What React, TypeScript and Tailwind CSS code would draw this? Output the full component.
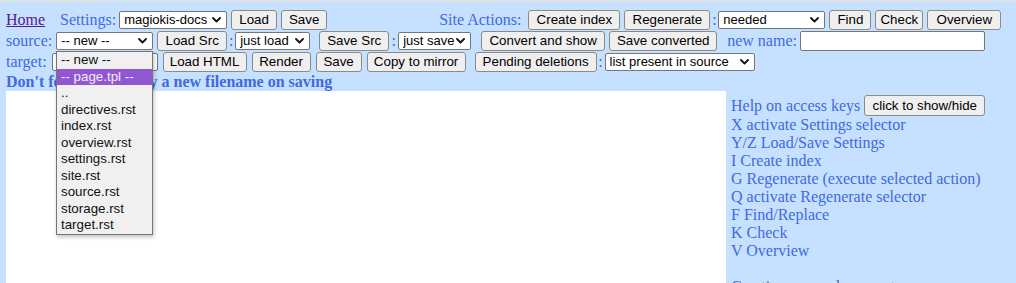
import React from "react";

const serif = { fontFamily: '"Liberation Serif", "Times New Roman", serif' };
const sans = { fontFamily: '"Liberation Sans", Arial, sans-serif' };

function Btn({ w, children, className = "" }: { w: string; children: React.ReactNode; className?: string }) {
  return (
    <div
      style={sans}
      className={`h-[20px] shrink-0 flex items-center justify-center whitespace-nowrap rounded-[3px] border border-[#8a8a8a] bg-[#efefef] text-[13.33px] text-black ${w} ${className}`}
    >
      {children}
    </div>
  );
}

function Chevron() {
  return (
    <svg width="9" height="6" viewBox="0 0 9 6" className="shrink-0">
      <path d="M1 1 L4.5 4.5 L8 1" fill="none" stroke="#111" strokeWidth="1.8" strokeLinecap="round" strokeLinejoin="round" />
    </svg>
  );
}

function Sel({ w, children, className = "" }: { w: string; children: React.ReactNode; className?: string }) {
  return (
    <div
      style={sans}
      className={`h-[18px] mt-[1px] shrink-0 flex items-center justify-between whitespace-nowrap overflow-hidden rounded-[2px] border border-[#767676] bg-white pl-[4px] pr-[5px] text-[13px] text-black ${w} ${className}`}
    >
      <span className="overflow-hidden">{children}</span>
      <Chevron />
    </div>
  );
}

function Label({ children, className = "text-[#4169e1]" }: { children: React.ReactNode; className?: string }) {
  return (
    <span style={serif} className={`shrink-0 whitespace-nowrap text-[16px] leading-[20px] ${className}`}>
      {children}
    </span>
  );
}

function Colon({ w }: { w: string }) {
  return (
    <span style={serif} className={`shrink-0 text-center text-[16px] leading-[20px] text-[#4169e1] ${w}`}>
      :
    </span>
  );
}

const options = [
  "-- new --",
  "-- page.tpl --",
  "..",
  "directives.rst",
  "index.rst",
  "overview.rst",
  "settings.rst",
  "site.rst",
  "source.rst",
  "storage.rst",
  "target.rst",
];

const helpLines = [
  "X activate Settings selector",
  "Y/Z Load/Save Settings",
  "I Create index",
  "G Regenerate (execute selected action)",
  "Q activate Regenerate selector",
  "F Find/Replace",
  "K Check",
  "V Overview",
];

export default function App() {
  return (
    <div className="relative w-[1016px] h-[283px] overflow-hidden bg-[#c6e1ff]">
      <div className="h-[2px] bg-[#dde3ea]" />
      <div className="pt-[8px] pl-[6px]">
        {/* Row 1 */}
        <div className="flex h-[21px] items-start">
          <Label className="underline text-[#551a8b]">Home</Label>
          <Label className="ml-[15px] text-[#4169e1]">Settings:</Label>
          <Sel w="w-[108px]" className="ml-[3px]">magiokis-docs</Sel>
          <Btn w="w-[46px]" className="ml-[4px]">Load</Btn>
          <Btn w="w-[46px]" className="ml-[4px]">Save</Btn>
          <Label className="ml-[112px] text-[#4169e1]">Site Actions:</Label>
          <Btn w="w-[92px]" className="ml-[7px]">Create index</Btn>
          <Btn w="w-[86px]" className="ml-[4px]">Regenerate</Btn>
          <Colon w="w-[8px]" />
          <Sel w="w-[107px]">needed</Sel>
          <Btn w="w-[42px]" className="ml-[4px]">Find</Btn>
          <Btn w="w-[48px]" className="ml-[4px]">Check</Btn>
          <Btn w="w-[74px]" className="ml-[4px]">Overview</Btn>
        </div>
        {/* Row 2 */}
        <div className="flex h-[21px] items-start">
          <Label>source:</Label>
          <Sel w="w-[97px]" className="ml-[4px]">-- new --</Sel>
          <Btn w="w-[70px]" className="ml-[4px]">Load Src</Btn>
          <Colon w="w-[8px]" />
          <Sel w="w-[75px]">just load</Sel>
          <Btn w="w-[70px]" className="ml-[9px]">Save Src</Btn>
          <Colon w="w-[9px]" />
          <Sel w="w-[73px]">just save</Sel>
          <Btn w="w-[124px]" className="ml-[10px]">Convert and show</Btn>
          <Btn w="w-[108px]" className="ml-[4px]">Save converted</Btn>
          <Label className="ml-[10px] text-[#4169e1]">new name:</Label>
          <div className="ml-[3px] h-[20px] w-[185px] shrink-0 rounded-[2px] border border-[#767676] bg-white" />
        </div>
        {/* Row 3 */}
        <div className="flex h-[21px] items-start">
          <Label>target:</Label>
          <Sel w="w-[106px]" className="ml-[5px]">-- new --</Sel>
          <Btn w="w-[84px]" className="ml-[5px]">Load HTML</Btn>
          <Btn w="w-[59px]" className="ml-[5px]">Render</Btn>
          <Btn w="w-[46px]" className="ml-[5px]">Save</Btn>
          <Btn w="w-[99px]" className="ml-[5px]">Copy to mirror</Btn>
          <Btn w="w-[122px]" className="ml-[9px]">Pending deletions</Btn>
          <Colon w="w-[8px]" />
          <Sel w="w-[150px]">list present in source</Sel>
        </div>
        {/* Row 4 */}
        <div style={serif} className="h-[18px] text-[16px] leading-[18px] font-bold text-[#4169e1] whitespace-nowrap">
          Don't forget to specify a new filename on saving
        </div>
        {/* Main */}
        <div className="flex">
          <div className="h-[400px] w-[720px] shrink-0 bg-white" />
          <div style={serif} className="flex-1 pt-[4px] pl-[5px] text-[16px] text-[#4169e1]">
            <div className="flex h-[21px] items-center">
              <span className="leading-[18px] whitespace-nowrap">Help on access keys</span>
              <div
                style={sans}
                className="ml-[4px] h-[21px] w-[121px] flex items-center justify-center whitespace-nowrap rounded-[3px] border border-[#8a8a8a] bg-[#efefef] text-[13.33px] text-black"
              >
                click to show/hide
              </div>
            </div>
            {helpLines.map((l) => (
              <div key={l} className="leading-[18px] whitespace-nowrap">
                {l}
              </div>
            ))}
            <div className="h-[18px]" />
            <div className="leading-[18px] whitespace-nowrap">Creating a new document</div>
          </div>
        </div>
      </div>

      {/* Open dropdown list */}
      <div
        style={sans}
        className="absolute left-[56px] top-[51px] w-[97px] border border-[#767676] bg-[#f0f0f0] text-[13.33px] text-[#111] shadow-[1px_2px_4px_rgba(0,0,0,0.25)]"
      >
        {options.map((o, i) => (
          <div
            key={o}
            className={`h-[16.5px] pl-[4px] leading-[16.5px] whitespace-nowrap ${
              i === 1 ? "bg-[#9157d3] text-[#f2ecfa]" : ""
            }`}
          >
            {o}
          </div>
        ))}
      </div>
    </div>
  );
}
